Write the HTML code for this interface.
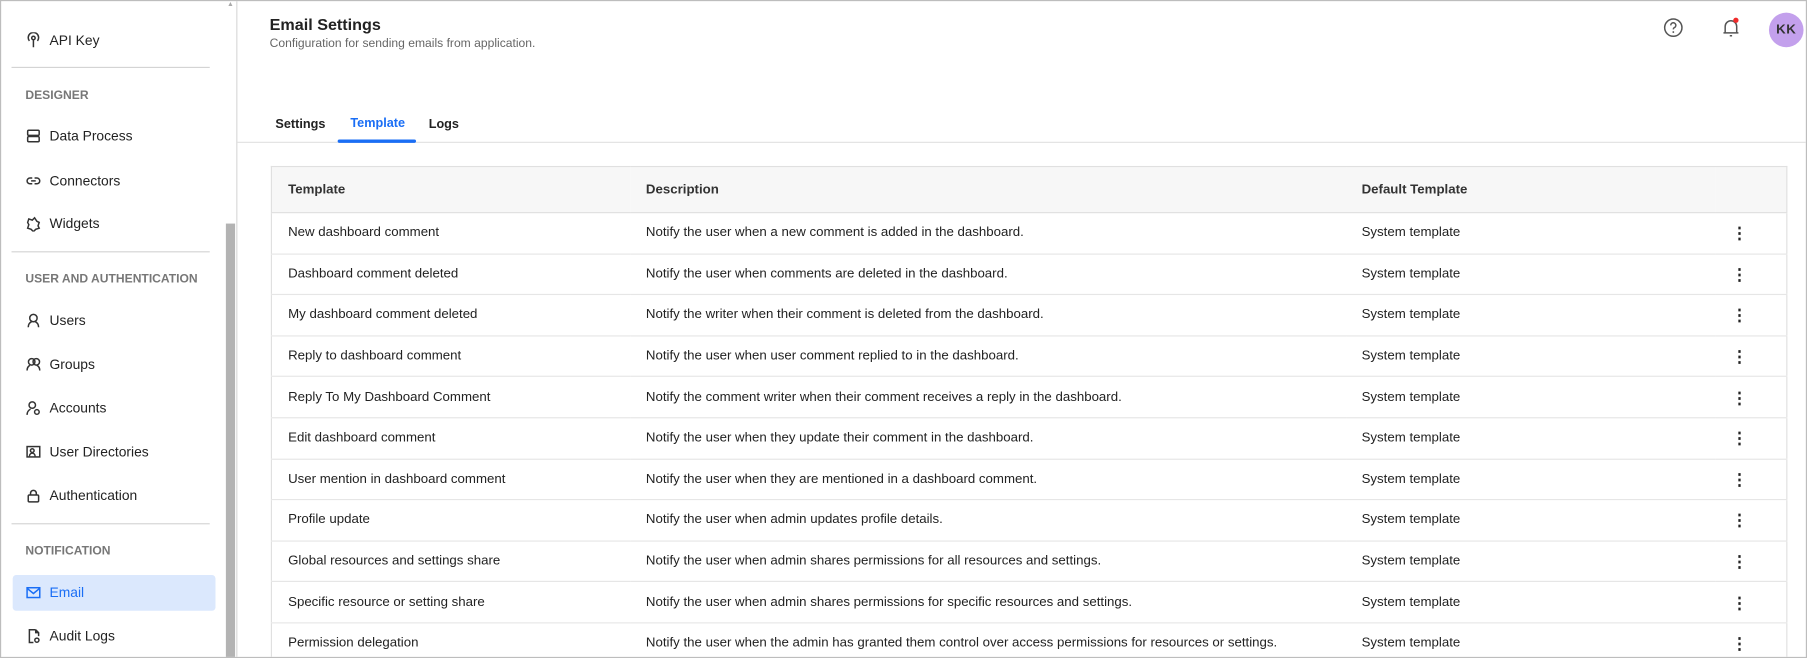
<!DOCTYPE html>
<html><head><meta charset="utf-8"><style>
html,body{margin:0;padding:0;width:1807px;height:658px;overflow:hidden;background:#fff;font-family:"Liberation Sans",Arial,sans-serif;}
#w{position:absolute;left:0;top:0;width:1568px;height:571px;transform:scale(1.15242);transform-origin:0 0;box-sizing:border-box;border:1px solid #bdbdbd;overflow:hidden}
.a{position:absolute;white-space:nowrap}
.si{position:absolute;left:42px;font-size:12px;color:#222;transform:translateY(-50%)}
.sh{position:absolute;left:21px;font-size:10.5px;color:#777;font-weight:bold;transform:translateY(-50%)}
.hl{position:absolute;left:9px;width:172px;height:1px;background:#d4d4d4}
.ic{position:absolute;left:21px;width:14px;height:14px;transform:translateY(-50%)}
.ic svg{width:14px;height:14px;fill:none;stroke:#333;stroke-width:1.3}
table{position:absolute;left:234px;top:143px;width:1316px;table-layout:fixed;border-collapse:collapse;border:1px solid #e0e0e0;font-size:11.5px;color:#222}
th{background:#f7f7f7;height:39px;text-align:left;font-weight:bold;font-size:11.5px;color:#333;padding:0 0 0 14px;border-bottom:1px solid #e0e0e0}
td{height:34.6px;padding:0 0 0 14px;border-bottom:1px solid #e6e6e6;white-space:nowrap}
.k{font-weight:bold;font-size:14px;line-height:4px;letter-spacing:0}
</style></head><body><div id="w">
<div class="a" style="left:196px;top:0;width:4px;height:4px;color:#aaa;font-size:6px;">▲</div>
<div class="a" style="left:195px;top:193px;width:8px;height:378px;background:#b3b3b3"></div>
<div class="a" style="left:204px;top:0;width:1px;height:571px;background:#d8d8d8"></div>

<div class="ic" style="top:34px"><svg viewBox="0 0 14 14"><circle cx="7" cy="5" r="1.5"/><path d="M7 6.5V13M3.5 7.5a4.5 4.5 0 1 1 7 0"/></svg></div>
<div class="si" style="top:34px">API Key</div>
<div class="hl" style="top:57px"></div>
<div class="sh" style="top:82px">DESIGNER</div>
<div class="ic" style="top:117px"><svg viewBox="0 0 14 14"><rect x="2" y="2" width="10" height="4.5" rx="1"/><rect x="2" y="7.5" width="10" height="4.5" rx="1"/></svg></div>
<div class="si" style="top:117px">Data Process</div>
<div class="ic" style="top:156px"><svg viewBox="0 0 14 14"><path d="M6 4.5H4a2.5 2.5 0 0 0 0 5h2M8 4.5h2a2.5 2.5 0 0 1 0 5H8M5 7h4"/></svg></div>
<div class="si" style="top:156px">Connectors</div>
<div class="ic" style="top:193px"><svg viewBox="0 0 14 14"><path d="M3 3l3 1 2-2 2 3 2 1-1 3 1 2-3 1-2 2-2-2-3-1 1-3-1-2z"/></svg></div>
<div class="si" style="top:193px">Widgets</div>
<div class="hl" style="top:217px"></div>
<div class="sh" style="top:241px">USER AND AUTHENTICATION</div>
<div class="ic" style="top:277px"><svg viewBox="0 0 14 14"><circle cx="7" cy="5" r="3.2"/><path d="M2.5 13c0-3 2-4.5 3-5M11.5 13c0-3-2-4.5-3-5"/></svg></div>
<div class="si" style="top:277px">Users</div>
<div class="ic" style="top:315px"><svg viewBox="0 0 14 14"><circle cx="5.5" cy="5" r="2.8"/><circle cx="9.5" cy="5" r="2.8"/><path d="M1.5 12.5c0-2.5 1.5-4 2.5-4.5M12.5 12.5c0-2.5-1.5-4-2.5-4.5"/></svg></div>
<div class="si" style="top:315px">Groups</div>
<div class="ic" style="top:353px"><svg viewBox="0 0 14 14"><circle cx="6" cy="4.5" r="2.8"/><path d="M1.5 13c0-3 2-4.5 3-5"/><circle cx="10" cy="10.5" r="2"/></svg></div>
<div class="si" style="top:353px">Accounts</div>
<div class="ic" style="top:391px"><svg viewBox="0 0 14 14"><rect x="1.5" y="2.5" width="11" height="9"/><circle cx="6" cy="6" r="1.6"/><path d="M3.5 11c0-2 1.5-2.8 2.5-2.8S8.5 9 8.5 11"/></svg></div>
<div class="si" style="top:391px">User Directories</div>
<div class="ic" style="top:429px"><svg viewBox="0 0 14 14"><rect x="2.5" y="6.5" width="9" height="6" rx="1"/><path d="M4.5 6.5V5a2.5 2.5 0 0 1 5 0v1.5"/></svg></div>
<div class="si" style="top:429px">Authentication</div>
<div class="hl" style="top:453px"></div>
<div class="sh" style="top:477px">NOTIFICATION</div>
<div class="a" style="left:10px;top:498px;width:176px;height:31px;background:#dbe8fd;border-radius:3px"></div>
<div class="ic" style="top:513px"><svg viewBox="0 0 14 14" style="stroke:#1a6ef5"><rect x="1.5" y="3" width="11" height="8.5"/><path d="M1.5 3.5L7 8l5.5-4.5"/></svg></div>
<div class="si" style="top:513px;color:#1a6ef5">Email</div>
<div class="ic" style="top:551px"><svg viewBox="0 0 14 14"><path d="M9 1.5H3.5v11H7M9 1.5l2.5 2.5v3M9 1.5V4h2.5"/><circle cx="10" cy="10.5" r="1.8"/></svg></div>
<div class="si" style="top:551px">Audit Logs</div>

<div class="a" style="left:233px;top:12px;font-size:14px;font-weight:bold;color:#222">Email Settings</div>
<div class="a" style="left:233px;top:31px;font-size:10.5px;color:#666">Configuration for sending emails from application.</div>
<svg class="a" style="left:1442px;top:14px" width="18" height="18" viewBox="0 0 18 18"><circle cx="9" cy="9" r="7.5" fill="none" stroke="#555" stroke-width="1.3"/><path d="M6.8 7a2.2 2.2 0 1 1 3 2c-.7.4-.8.8-.8 1.5" fill="none" stroke="#555" stroke-width="1.3"/><circle cx="9" cy="12.8" r=".8" fill="#555"/></svg>
<svg class="a" style="left:1492px;top:13px" width="18" height="20" viewBox="0 0 18 20"><path d="M4 14V9a5 5 0 0 1 10 0v5M2.5 14.5h13M8 17h2" fill="none" stroke="#555" stroke-width="1.3"/><circle cx="13.3" cy="3.6" r="2.3" fill="#f02a2a"/></svg>
<div class="a" style="left:1534px;top:10px;width:30px;height:30px;border-radius:50%;background:#c3a0ec;color:#333;font-size:11.5px;font-weight:bold;text-align:center;line-height:30px;letter-spacing:.5px">KK</div>

<div class="a" style="left:238px;top:101px;font-size:11px;font-weight:bold;color:#222">Settings</div>
<div class="a" style="left:303px;top:100px;font-size:11px;font-weight:bold;color:#1a6ef5">Template</div>
<div class="a" style="left:371px;top:101px;font-size:11px;font-weight:bold;color:#222">Logs</div>
<div class="a" style="left:205px;top:122px;width:1362px;height:1px;background:#e2e2e2"></div>
<div class="a" style="left:292px;top:120px;width:68px;height:3px;border-radius:2px;background:#1a6ef5"></div>

<table>
<colgroup><col style="width:311px"><col style="width:621px"><col style="width:321px"><col></colgroup>
<tr><th>Template</th><th>Description</th><th>Default Template</th><th></th></tr>
<tr><td>New dashboard comment</td><td>Notify the user when a new comment is added in the dashboard.</td><td>System template</td><td class="k">⋮</td></tr>
<tr><td>Dashboard comment deleted</td><td>Notify the user when comments are deleted in the dashboard.</td><td>System template</td><td class="k">⋮</td></tr>
<tr><td>My dashboard comment deleted</td><td>Notify the writer when their comment is deleted from the dashboard.</td><td>System template</td><td class="k">⋮</td></tr>
<tr><td>Reply to dashboard comment</td><td>Notify the user when user comment replied to in the dashboard.</td><td>System template</td><td class="k">⋮</td></tr>
<tr><td>Reply To My Dashboard Comment</td><td>Notify the comment writer when their comment receives a reply in the dashboard.</td><td>System template</td><td class="k">⋮</td></tr>
<tr><td>Edit dashboard comment</td><td>Notify the user when they update their comment in the dashboard.</td><td>System template</td><td class="k">⋮</td></tr>
<tr><td>User mention in dashboard comment</td><td>Notify the user when they are mentioned in a dashboard comment.</td><td>System template</td><td class="k">⋮</td></tr>
<tr><td>Profile update</td><td>Notify the user when admin updates profile details.</td><td>System template</td><td class="k">⋮</td></tr>
<tr><td>Global resources and settings share</td><td>Notify the user when admin shares permissions for all resources and settings.</td><td>System template</td><td class="k">⋮</td></tr>
<tr><td>Specific resource or setting share</td><td>Notify the user when admin shares permissions for specific resources and settings.</td><td>System template</td><td class="k">⋮</td></tr>
<tr><td>Permission delegation</td><td>Notify the user when the admin has granted them control over access permissions for resources or settings.</td><td>System template</td><td class="k">⋮</td></tr>
</table>
</div></body></html>
